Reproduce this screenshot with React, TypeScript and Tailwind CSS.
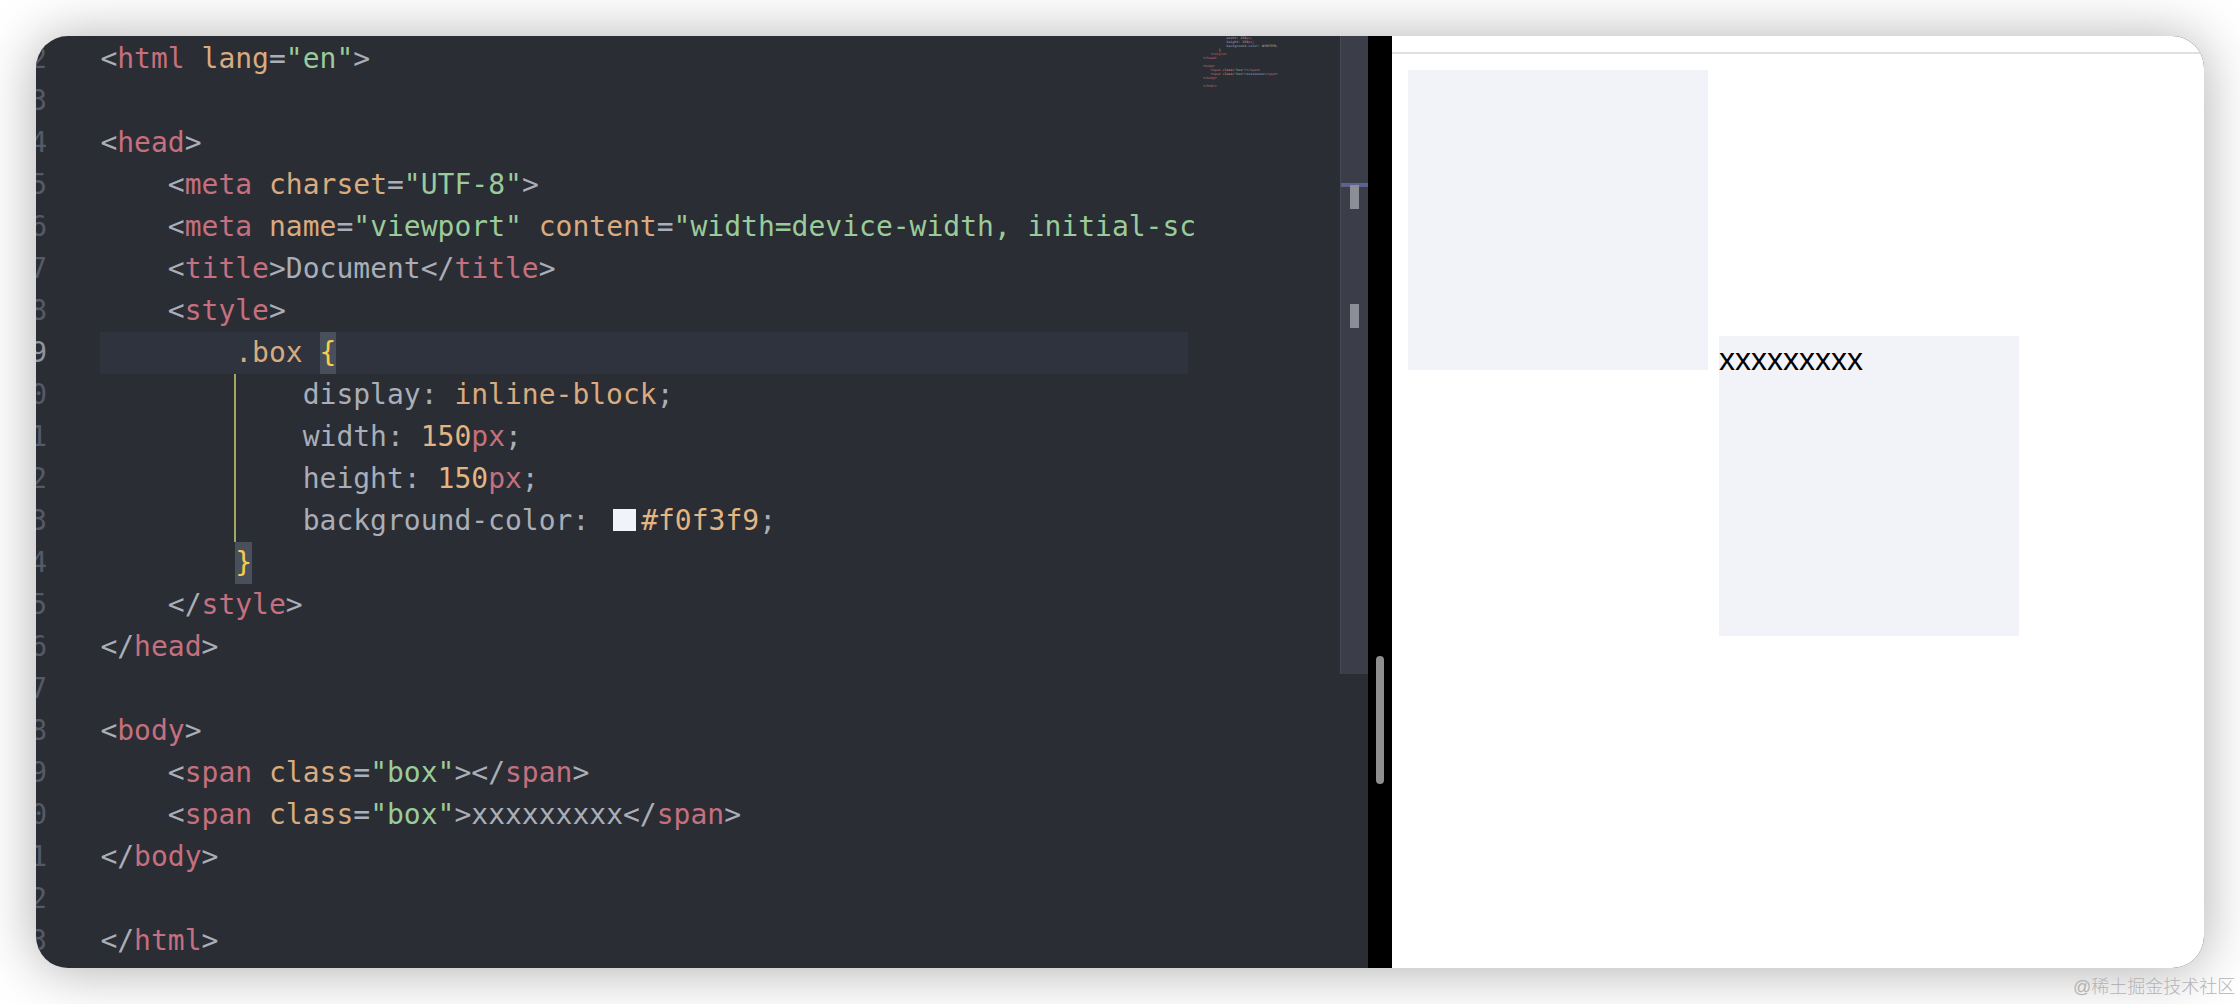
import React from 'react';

type Tok = [string, 'p' | 't' | 'a' | 's' | 'n' | 'u' | 'y' | 'c'];

const tone = {
  p: 'text-[#a9aeb8]', // punctuation and plain text
  t: 'text-[#c4707f]', // tag names
  a: 'text-[#d9ab80]', // attributes
  s: 'text-[#9acb9a]', // strings
  n: 'text-[#e3b583]', // numbers
  u: 'text-[#c4707f]', // units
  y: 'text-[#f7cd4c]', // braces
  c: 'text-[#d6ab7e]', // selector
};

const open = (name: string): Tok[] => [['<', 'p'], [name, 't']];
const close = (name: string): Tok[] => [['</', 'p'], [name, 't'], ['>', 'p']];
const tag = (name: string): Tok[] => [['<', 'p'], [name, 't'], ['>', 'p']];
const attr = (name: string, value: string): Tok[] => [[name, 'a'], ['=', 'p'], [`"${value}"`, 's']];

const lines: { n: number; indent: number; toks: Tok[] }[] = [
  { n: 2, indent: 0, toks: [...open('html'), [' ', 'p'], ...attr('lang', 'en'), ['>', 'p']] },
  { n: 3, indent: 0, toks: [] },
  { n: 4, indent: 0, toks: tag('head') },
  { n: 5, indent: 4, toks: [...open('meta'), [' ', 'p'], ...attr('charset', 'UTF-8'), ['>', 'p']] },
  {
    n: 6,
    indent: 4,
    toks: [
      ...open('meta'),
      [' ', 'p'],
      ...attr('name', 'viewport'),
      [' ', 'p'],
      ...attr('content', 'width=device-width, initial-scale=1.0'),
      ['>', 'p'],
    ],
  },
  { n: 7, indent: 4, toks: [...tag('title'), ['Document', 'p'], ...close('title')] },
  { n: 8, indent: 4, toks: tag('style') },
  { n: 9, indent: 8, toks: [['.box ', 'c'], ['{', 'y']] },
  { n: 10, indent: 12, toks: [['display: ', 'p'], ['inline-block', 'a'], [';', 'p']] },
  { n: 11, indent: 12, toks: [['width: ', 'p'], ['150', 'n'], ['px', 'u'], [';', 'p']] },
  { n: 12, indent: 12, toks: [['height: ', 'p'], ['150', 'n'], ['px', 'u'], [';', 'p']] },
  { n: 13, indent: 12, toks: [['background-color: ', 'p'], ['#f0f3f9', 'n'], [';', 'p']] },
  { n: 14, indent: 8, toks: [['}', 'y']] },
  { n: 15, indent: 4, toks: close('style') },
  { n: 16, indent: 0, toks: close('head') },
  { n: 17, indent: 0, toks: [] },
  { n: 18, indent: 0, toks: tag('body') },
  { n: 19, indent: 4, toks: [...open('span'), [' ', 'p'], ...attr('class', 'box'), ['>', 'p'], ...close('span')] },
  {
    n: 20,
    indent: 4,
    toks: [...open('span'), [' ', 'p'], ...attr('class', 'box'), ['>xxxxxxxxx', 'p'], ...close('span')],
  },
  { n: 21, indent: 0, toks: close('body') },
  { n: 22, indent: 0, toks: [] },
  { n: 23, indent: 0, toks: close('html') },
];

const mono = "font-['DejaVu_Sans_Mono',monospace]";

function CodeLine({ n, indent, toks }: { n: number; indent: number; toks: Tok[] }) {
  const guide = n >= 10 && n <= 13;
  return (
    <div className={`relative h-[42px] w-[1088px] whitespace-pre leading-[42px] ${n === 9 ? 'bg-[#2e333d]' : ''}`}>
      {guide && <span className="absolute left-[134px] top-0 h-full w-[1.5px] bg-[#a3a85e]" />}
      {' '.repeat(indent)}
      {toks.map(([text, kind], i) => {
        const brace = kind === 'y';
        if (text === '#f0f3f9') {
          return (
            <React.Fragment key={i}>
              <span className="ml-[7px] mr-[5px] inline-block h-[22px] w-[23px] bg-[#f0f3f9] align-[-1px]" />
              <span className={tone[kind]}>{text}</span>
            </React.Fragment>
          );
        }
        return (
          <span key={i} className={`${tone[kind]} ${brace ? 'inline-block h-[42px] bg-[#4a4f5c]' : ''}`}>
            {text}
          </span>
        );
      })}
    </div>
  );
}

export default function App() {
  return (
    <div className="relative h-[1004px] w-[2240px] overflow-hidden bg-white px-[36px] pt-[36px]">
      <div className="flex h-[932px] w-[2168px] overflow-hidden rounded-[32px] bg-[#2a2d33] shadow-[0_2px_56px_rgba(0,0,0,0.32)]">
        {/* Gutter, the numbers are cut by the window edge */}
        <div className={`w-[11px] shrink-0 pt-[2px] text-[28px] leading-[42px] ${mono}`}>
          {lines.map((l) => (
            <div
              key={l.n}
              className={`flex h-[42px] justify-end whitespace-nowrap ${l.n === 9 ? 'text-[#8f949e]' : 'text-[#545a68]'}`}
            >
              <span className="shrink-0">{l.n}</span>
            </div>
          ))}
        </div>

        {/* Code */}
        <div className={`ml-[53.4px] w-[1093.6px] shrink-0 overflow-hidden pt-[2px] text-[28px] ${mono}`}>
          {lines.map((l) => (
            <CodeLine key={l.n} {...l} />
          ))}
        </div>

        {/* Minimap */}
        <div className={`w-[146px] shrink-0 overflow-hidden pl-[9px] text-[3.27px] leading-[4px] ${mono}`}>
          <div className="-mt-[36px]">
            {lines.map((l) => (
              <div key={l.n} className="h-[4px] whitespace-pre">
                {' '.repeat(l.indent)}
                {l.toks.map(([text, kind], i) => (
                  <span key={i} className={tone[kind]}>
                    {text}
                  </span>
                ))}
              </div>
            ))}
          </div>
        </div>

        {/* Editor scrollbar */}
        <div className="relative h-[638px] w-[28px] shrink-0 border-l border-[#474a52] bg-[#3b3e49]">
          <div className="absolute left-0 right-0 top-[147px] h-[4px] bg-[#5a6390]" />
          <div className="absolute left-[9px] top-[149px] h-[24px] w-[9px] bg-[#8b8e96]" />
          <div className="absolute left-[9px] top-[268px] h-[24px] w-[9px] bg-[#8b8e96]" />
        </div>

        {/* Divider with the preview's scrollbar */}
        <div className="relative w-[24px] shrink-0 bg-black">
          <div className="absolute left-[8px] top-[620px] h-[128px] w-[8px] rounded-full bg-[#8e8e8e]" />
        </div>

        {/* Preview */}
        <div className="min-w-0 flex-1 bg-white font-['Liberation_Sans',sans-serif] text-[32px] text-black">
          <div className="h-[18px] border-b-2 border-[#e0e0e0]" />
          <div className="pl-[16px] pt-[16px]">
            <span className="mr-[11px] inline-block h-[300px] w-[300px] bg-[#f1f3f8]" />
            <span className="inline-block h-[300px] w-[300px] bg-[#f1f3f8] leading-[46px]">xxxxxxxxx</span>
          </div>
        </div>
      </div>

      <div className="absolute left-[2073px] top-[976px] whitespace-nowrap font-['Liberation_Sans','Noto_Sans_CJK_SC',sans-serif] text-[18px] font-light leading-[22px] text-[#b4b4b4]">
        @稀土掘金技术社区
      </div>
    </div>
  );
}
